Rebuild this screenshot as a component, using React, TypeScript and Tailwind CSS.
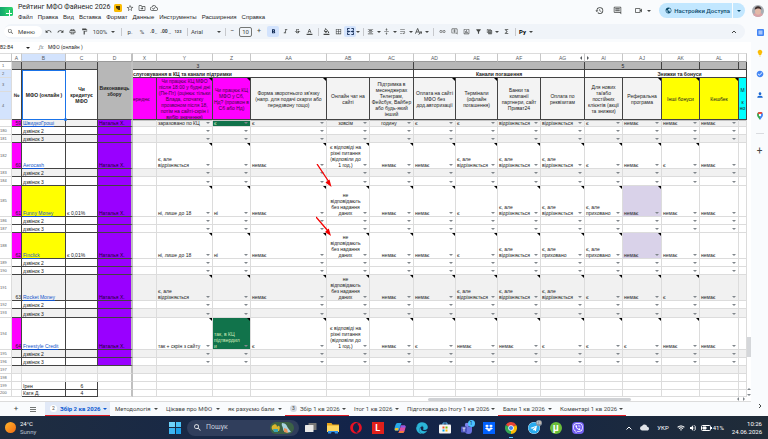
import React, { useState } from "react";
import {
  MdBorderAll,
  MdCheckCircle,
  MdCloud,
  MdFilterAlt,
  MdFormatAlignCenter,
  MdFormatBold,
  MdFormatColorFill,
  MdFormatColorText,
  MdFormatItalic,
  MdFormatPaint,
  MdFunctions,
  MdHistory,
  MdInsertChartOutlined,
  MdLightbulb,
  MdLink,
  MdOutlineAddComment,
  MdOutlineCloudDone,
  MdOutlineComment,
  MdOutlineDriveFileMove,
  MdOutlinePrint,
  MdOutlineVideocam,
  MdPerson,
  MdPublic,
  MdRedo,
  MdSearch,
  MdStarBorder,
  MdStrikethroughS,
  MdTableView,
  MdUndo,
  MdVerticalAlignCenter,
  MdVolumeUp,
  MdWifi,
  MdWrapText,
} from "react-icons/md";
import { FaDropbox, FaEdge, FaOpera, FaTelegram, FaViber } from "react-icons/fa";

const Caret = ({ className = "" }: { className?: string }) => (
  <svg viewBox="0 0 4 2" className={`h-[2px] w-1 shrink-0 ${className}`} fill="currentColor">
    <path d="M0 0h4L2 2z" />
  </svg>
);

const Sep = () => (
  <span className="flex w-[6px] shrink-0 justify-center">
    <span className="h-2 w-px bg-[#c7c9cd]" />
  </span>
);

const Tool = ({
  label,
  width = "w-3",
  active = false,
  children,
}: {
  label: string;
  width?: string;
  active?: boolean;
  children: React.ReactNode;
}) => (
  <button
    type="button"
    aria-label={label}
    className={`flex h-[11px] shrink-0 items-center justify-center rounded-[2px] ${width} ${
      active ? "bg-[#d3e3fd] text-[#041e49]" : ""
    }`}
  >
    {children}
  </button>
);

const menus = ["Файл", "Правка", "Вид", "Вставка", "Формат", "Данные", "Инструменты", "Расширения", "Справка"];

const Header = () => (
  <header className="flex h-[22px] items-start justify-between pr-1">
    <div className="flex pt-[2px]">
      <svg viewBox="0 0 14 11" className="mt-1 h-[11px] w-[14px] shrink-0">
        <defs>
          <linearGradient id="sheet" x1="0" x2="1" y1="0" y2="0">
            <stop offset="0" stopColor="#0c9d6c" />
            <stop offset="1" stopColor="#2fd66d" />
          </linearGradient>
        </defs>
        <rect x="-2" y="1" width="15" height="9" rx="1.500" fill="url(#sheet)" />
        <path d="M5 3h8v6H5z" fill="#22c96a" />
        <path d="M9.500 4v6M6 7.500h6" stroke="#fff" strokeWidth="1" />
      </svg>
      <div className="pl-1">
        <div className="flex h-[11px] items-center">
          <h1 className="font-['Roboto',sans-serif] text-[7px] leading-[11px] whitespace-nowrap text-[#1f1f1f]">
            Рейтинг МФО Файненс 2026
          </h1>
          <svg viewBox="0 0 8 8" className="ml-1 h-2 w-2">
            <rect width="8" height="8" rx="1.500" fill="#fbbc04" />
            <path d="M2 2h4v4H4.500L2 4z" fill="#4b3900" />
          </svg>
          <div className="ml-1 flex gap-1 text-[8px] text-[#444746]">
            <button type="button" aria-label="Пометить"><MdStarBorder /></button>
            <button type="button" aria-label="Переместить"><MdOutlineDriveFileMove /></button>
            <button type="button" aria-label="Сохранено"><MdOutlineCloudDone /></button>
          </div>
        </div>
        <nav className="flex gap-[5px] font-['Liberation_Sans',Arial,sans-serif] text-[6px] leading-2 text-[#1f1f1f]">
          {menus.map((m) => (
            <button type="button" key={m}>{m}</button>
          ))}
        </nav>
      </div>
    </div>
    <div className="flex items-center pt-[3px] text-[#444746]">
      <button type="button" aria-label="История" className="mr-[9px] text-[9px]"><MdHistory /></button>
      <button type="button" aria-label="Комментарии" className="mr-3 text-[9px]"><MdOutlineComment /></button>
      <button type="button" aria-label="Встреча" className="mr-2 flex items-center gap-1 text-[9px]">
        <MdOutlineVideocam />
        <Caret />
      </button>
      <div className="mr-[7px] flex h-[15px] items-center rounded-full bg-[#c2e7ff] text-[#0b4a6b]">
        <button type="button" className="flex h-full items-center gap-[2px] border-r border-[#f9fbfd] pr-[2px] pl-[6px] text-[6px] font-medium">
          <MdPublic className="text-[7px]" />
          Настройки Доступа
        </button>
        <button type="button" aria-label="Доступ" className="px-1"><Caret /></button>
      </div>
      <svg viewBox="0 0 12 12" className="h-3 w-3 rounded-full">
        <rect width="12" height="12" fill="#a9aeb4" />
        <path d="M0 12c1-4 3-4 6-4s5 0 6 4z" fill="#d9a3a8" />
        <ellipse cx="6" cy="6" rx="3" ry="3.800" fill="#e3b9a8" />
        <path d="M2.800 5C2 0 10 0 9.300 5 8.500 3 4 3 2.800 5z" fill="#3a2c2b" />
      </svg>
    </div>
  </header>
);

const Toolbar = () => (
  <div className="mt-[2px] mr-[6px] ml-1 flex h-[15px] items-center rounded-full bg-[#f0f4f9] text-[7px] text-[#444746]">
    <button type="button" className="flex h-[11px] w-[38px] shrink-0 items-center gap-1 rounded-full bg-white pl-[3px] text-[6px]">
      <MdSearch className="text-[7px]" />
      Меню
    </button>
    <Tool label="Отменить"><MdUndo /></Tool>
    <Tool label="Повторить"><MdRedo /></Tool>
    <Tool label="Печать"><MdOutlinePrint /></Tool>
    <Tool label="Формат по образцу"><MdFormatPaint /></Tool>
    <Tool label="Масштаб" width="w-[28px]">
      <span className="mr-1 text-[6px]">100%</span>
      <Caret />
    </Tool>
    <Sep />
    <Tool label="Денежный"><span className="text-[6px]">р.</span></Tool>
    <Tool label="Процент"><span className="text-[6px]">%</span></Tool>
    <Tool label="Уменьшить разрядность"><span className="text-[5px] font-bold">.0<sub>←</sub></span></Tool>
    <Tool label="Увеличить разрядность"><span className="text-[5px] font-bold">.00<sub>→</sub></span></Tool>
    <Tool label="Другие форматы"><span className="text-[4px] font-bold">123</span></Tool>
    <Sep />
    <Tool label="Шрифт" width="w-[32px]">
      <span className="mr-[14px] text-[6px]">Arial</span>
      <Caret />
    </Tool>
    <Sep />
    <Tool label="Меньше" width="w-2">−</Tool>
    <input
      aria-label="Размер шрифта"
      defaultValue="10"
      className="mx-[3px] h-[10px] w-[13px] shrink-0 rounded-[2px] border border-[#747775] text-center text-[6px]"
    />
    <Tool label="Больше" width="w-2">+</Tool>
    <span className="w-1" />
    <Tool label="Полужирный" active><MdFormatBold /></Tool>
    <Tool label="Курсив"><MdFormatItalic /></Tool>
    <Tool label="Зачеркнутый"><MdStrikethroughS /></Tool>
    <Tool label="Цвет текста"><MdFormatColorText /></Tool>
    <Sep />
    <Tool label="Заливка" width="w-[11px]"><MdFormatColorFill /></Tool>
    <Tool label="Границы"><MdBorderAll /></Tool>
    <Tool label="Объединить" active>
      <svg viewBox="0 0 8 8" className="h-[7px] w-[7px]" fill="none" stroke="currentColor">
        <path d="M3 .5H.5V3M5 .5h2.500V3M3 7.500H.5V5M5 7.500h2.500V5M0 4h3M8 4H5M2 3l1 1-1 1M6 3L5 4l1 1" />
      </svg>
    </Tool>
    <Caret />
    <Sep />
    <Tool label="Выравнивание" width="w-[16px]"><MdFormatAlignCenter className="mr-[3px]" /><Caret /></Tool>
    <Tool label="По вертикали" width="w-[16px]"><MdVerticalAlignCenter className="mr-[3px]" /><Caret /></Tool>
    <Tool label="Перенос" width="w-[16px]"><MdWrapText className="mr-[3px]" /><Caret /></Tool>
    <Tool label="Поворот" width="w-[16px]">
      <svg viewBox="0 0 8 8" className="mr-[3px] h-[7px] w-[7px]" fill="none" stroke="currentColor">
        <path d="M.5 6.500L3 .5l2.500 6M1.500 4.500h3M4 7.500l3.500-3M7.500 6.500v-2h-2" />
      </svg>
      <Caret />
    </Tool>
    <Sep />
    <Tool label="Ссылка"><MdLink /></Tool>
    <Tool label="Комментарий"><MdOutlineAddComment /></Tool>
    <Tool label="Диаграмма"><MdInsertChartOutlined /></Tool>
    <Tool label="Фильтр"><MdFilterAlt /></Tool>
    <Tool label="Таблица" width="w-[16px]"><MdTableView className="mr-[2px]" /><Caret /></Tool>
    <Tool label="Функции"><MdFunctions /></Tool>
    <Sep />
    <Tool label="Язык" width="w-[16px]"><span className="mr-[3px] text-[6px] font-bold text-black">Pу</span><Caret /></Tool>
    <button type="button" aria-label="Скрыть" className="mr-2 ml-auto">
      <svg viewBox="0 0 6 4" className="h-1 w-[6px]" fill="none" stroke="currentColor">
        <path d="M1 3l2-2 2 2" />
      </svg>
    </button>
  </div>
);

const FormulaBar = () => (
  <div className="mt-[3px] flex h-[11px] items-center bg-white text-[5px] text-[#1f1f1f]">
    <input aria-label="Диапазон" defaultValue="B2:B4" className="w-[26px] text-[5px]" />
    <Caret />
    <span className="w-[18px] pl-[9px] font-serif text-[6px] text-[#80868b] italic">fx</span>
    <span>МФО (онлайн )</span>
  </div>
);

const colWidths = [12, 10, 44, 32, 35, 24, 56, 38, 76, 43, 44, 42, 42, 43, 44, 38, 39, 38, 39];
const letters = ["", "A", "B", "C", "D", "X", "Y", "Z", "AA", "AB", "AC", "AD", "AE", "AF", "AG", "AI", "AJ", "AK", "AL", ""];

const PINK = "bg-[#ff00ff] text-[#3d0a3d] font-bold";
const GREY = "bg-[#f3f3f3]";
const YELLOW = "bg-[#ffff00]";

const criteria = [
  { text: "ереднє", tone: "bg-[#ff00ff] text-[#3d0a3d]", note: false },
  {
    text: "Чи працює КЦ МФО\nпісля 18:00 у будні дні\n(Пн-Пт) (оцінює тільки\nВлада, спочатку\nпрозвоном після 18,\nпотім на сайті-скрін і\nвибір значення)",
    tone: PINK,
    note: true,
  },
  { text: "Чи працює КЦ\nМФО у Сб,\nНд? (прозвон в\nСб або Нд)", tone: PINK, note: true },
  { text: "Форма зворотнього зв'язку\n(напр. для подачі скарги або\nпередзвону тощо)", tone: GREY, note: true },
  { text: "Онлайн чат на\nсайті", tone: GREY, note: false },
  { text: "Підтримка в\nмесенджерах\nТелеграм,\nФейсбук, Вайбер\nабо будь-який\nінший", tone: GREY, note: false },
  { text: "Оплата на сайті\nМФО без\nдод.авторизації", tone: GREY, note: true },
  { text: "Термінали\n(офлайн\nпогашення)", tone: GREY, note: true },
  { text: "Банки та\nкомпанії\nпартнери, сайт\nПриват24", tone: GREY, note: false },
  { text: "Оплата по\nреквізитам", tone: GREY, note: false },
  { text: "Для нових\nта/або\nпостійних\nклієнтів (акції\nта знижки)", tone: GREY, note: false },
  { text: "Реферальна\nпрограма", tone: GREY, note: true },
  { text: "Інші бонуси", tone: YELLOW, note: true },
  { text: "Кешбек", tone: YELLOW, note: true },
  { text: "М\n\nк\nно", tone: "bg-[#00ffff] font-bold", note: false },
];

type Row = {
  n: string;
  h: string;
  id?: string;
  name?: string;
  rate?: string;
  grey?: boolean;
  yellow?: boolean;
  plain?: boolean;
  notes?: number;
  cells?: string[];
};

const DIFF = "є, але\nвідрізняється";
const HID = "є, але\nприховано";
const ANSWER = "є відповіді на\nрізні питання\n(відповіли до\n1 год.)";
const NOANSWER = "не\nвідповідають\nбез надання\nданих";
const NO = "немає";

const rows: Row[] = [
  { n: "", h: "h-[7px]", id: "59", name: "ШвидкоГроші", grey: true, cells: ["зараховано по КЦ", "є", "є", "зовсім", "годину", "є", "є", "відрізняється", "відрізняється", "є", NO, NO, NO] },
  { n: "180", h: "h-2", name: "дзвінок 2" },
  { n: "181", h: "h-2", name: "дзвінок 3", grey: true },
  { n: "182", h: "h-[26px]", id: "60", name: "Aerocash", notes: 12, cells: [DIFF, "", NO, ANSWER, NO, NO, DIFF, DIFF, DIFF, "є", NO, "є", NO] },
  { n: "183", h: "h-2", name: "дзвінок 2", grey: true },
  { n: "184", h: "h-[9px]", name: "дзвінок 3" },
  { n: "185", h: "h-[31px]", id: "61", name: "Funny Money", rate: "є 0,01%", yellow: true, notes: 11, cells: ["ні, лише до 18", "ні", NO, NOANSWER, NO, NO, "є", DIFF, DIFF, HID, NO, NO, NO] },
  { n: "186", h: "h-2", name: "дзвінок 2" },
  { n: "187", h: "h-2", name: "дзвінок 3" },
  { n: "188", h: "h-[26px]", id: "62", name: "Finclick", rate: "є 0,01%", yellow: true, notes: 11, cells: ["ні, лише до 18", "ні", NO, NOANSWER, NO, NO, "є", DIFF, HID, HID, NO, NO, NO] },
  { n: "189", h: "h-2", name: "дзвінок 2" },
  { n: "190", h: "h-2", name: "дзвінок 3" },
  { n: "191", h: "h-[26px]", id: "63", name: "Rocket Money", grey: true, notes: 12, cells: [DIFF, "", NO, NOANSWER, NO, NO, DIFF, DIFF, DIFF, "є", NO, "є", NO] },
  { n: "192", h: "h-2", name: "дзвінок 2" },
  { n: "193", h: "h-[9px]", name: "дзвінок 3", grey: true },
  { n: "194", h: "h-[32px]", id: "64", name: "Freestyle Credit", notes: 12, cells: ["так + скрін з сайту", "так, в КЦ\nпідтвердил\nи", "є", ANSWER, NO, "є", NO, NO, "є", "є", "є", NO, NO] },
  { n: "195", h: "h-2", name: "дзвінок 2", grey: true },
  { n: "196", h: "h-2", name: "дзвінок 3" },
  { n: "197", h: "h-2", plain: true, grey: true },
  { n: "198", h: "h-2", plain: true },
  { n: "199", h: "h-2", plain: true, name: "Ірен", rate: "6" },
  { n: "200", h: "h-[7px]", plain: true, name: "Катя Д.", rate: "4" },
];

const DARK = "border-r border-b border-[#434343]";
const LIGHT = "border-r border-b border-[#dcdcdc]";

const Note = () => (
  <svg viewBox="0 0 3 3" className="absolute top-0 right-0 h-[3px] w-[3px]">
    <path d="M0 0h3v3z" />
  </svg>
);

const RowNumber = ({ n, active = false }: { n: string; active?: boolean }) => (
  <th className={`${LIGHT} text-left align-middle font-normal text-[#575b5f] ${active ? "bg-[#d3e3fd]" : "bg-white"}`}>
    <span className="block w-[6px] text-center text-[4px]">{n}</span>
  </th>
);

const DataRow = ({ row, first }: { row: Row; first: boolean }) => {
  const base = row.grey ? "bg-[#f1f1f1]" : "bg-white";
  const frozen = first ? "shadow-[inset_0_1px_#c4c4c4]" : "";
  const named = row.plain && row.name;
  const pink = row.id && row.id !== "63";

  return (
    <tr className={`${row.h} ${base} align-bottom`}>
      <RowNumber n={row.n} />
      <td className={`${row.plain ? LIGHT : DARK} ${pink ? "bg-[#ff00ff]" : ""} text-right`}>{row.id}</td>
      <td className={`${row.plain && !named ? LIGHT : DARK} ${row.yellow ? YELLOW : ""} pl-px`}>
        {row.id ? (
          <a href="#site" className="text-[#1155cc] underline">{row.name}</a>
        ) : (
          row.name
        )}
      </td>
      <td className={`${row.plain && !named ? LIGHT : DARK} ${named ? "text-center" : ""} pl-px`}>{row.rate}</td>
      <td
        className={`border-r-2 border-b border-r-[#c0c0c0] pl-px ${
          row.plain ? "border-b-[#dcdcdc]" : "border-b-[#434343] bg-[#9900ff] text-[#1c0030]"
        }`}
      >
        {row.id ? "Наталья Х." : ""}
      </td>
      <td className={`${LIGHT} ${frozen}`}></td>
      {Array.from({ length: 13 }, (_, i) => {
        const text = row.cells?.[i] ?? "";
        const green = i === 1 && (row.n === "" || row.n === "194");
        const lilac = i === 10 && row.yellow;
        const centered = i === 3 || i === 4;
        return (
          <td
            key={i}
            className={`relative ${LIGHT} ${frozen} ${green ? "bg-[#11734b] text-[#d4edbc]" : ""} ${
              lilac ? "bg-[#d9d2e9]" : ""
            }`}
          >
            {!row.plain && (
              <div className="flex items-end justify-between pr-[2px] pl-px">
                <span className={`min-w-0 flex-1 whitespace-pre ${centered ? "text-center" : ""}`}>{text}</span>
                <button type="button" aria-label="Вибрати" className="flex h-[6px] shrink-0 items-center text-[#80868b]">
                  <Caret />
                </button>
              </div>
            )}
            {i < (row.notes ?? 0) && <Note />}
          </td>
        );
      })}
      <td className={`${LIGHT} ${frozen}`}></td>
    </tr>
  );
};

const Sheet = () => (
  <div className="relative min-w-0 flex-1 overflow-hidden bg-white">
    <table className="w-full table-fixed border-separate border-spacing-0 font-['Liberation_Sans',Arial,sans-serif] text-[5px] leading-[6px] text-[#222]">
      <colgroup>
        {colWidths.map((w, i) => (
          <col key={i} style={{ width: w }} />
        ))}
        <col />
      </colgroup>
      <thead>
        <tr className="h-[9px]">
          {letters.map((l, i) => (
            <th
              key={i}
              className={`relative border-b border-b-[#9a9a9a] font-normal text-[#575b5f] ${
                i === 4 ? "border-r-2 border-r-[#c0c0c0]" : "border-r border-r-[#c7c7c7]"
              } border-t border-t-[#dcdcdc] ${l === "B" ? "bg-[#d3e3fd]" : "bg-white"}`}
            >
              {l}
              {l === "AG" && <Caret className="absolute top-[3px] right-px rotate-90" />}
              {l === "AI" && <Caret className="absolute top-[3px] left-px -rotate-90" />}
            </th>
          ))}
        </tr>
        <tr className="h-2 bg-[#b7b7b7]">
          <RowNumber n="1" />
          <td className={DARK}></td>
          <td className={DARK}></td>
          <td className={DARK}></td>
          <th rowSpan={4} className="border-r-2 border-b border-r-[#c0c0c0] border-b-[#434343] whitespace-pre">
            {"Виконавець\nзбору"}
          </th>
          <th colSpan={6} className={`${DARK} pr-[150px] font-normal`}>3</th>
          <td colSpan={4} className={DARK}></td>
          <th colSpan={2} className={`${DARK} font-normal`}>5</th>
          <td className={DARK}></td>
          <td className={DARK}></td>
          <td className={DARK}></td>
        </tr>
        <tr className="h-2">
          <RowNumber n="2" active />
          <th rowSpan={3} className={DARK}>№</th>
          <th rowSpan={3} className="relative border border-[#1a73e8]">
            МФО (онлайн )
            <span className="absolute -right-[2px] -bottom-[2px] size-[3px] rounded-full bg-[#1a73e8]" />
          </th>
          <th rowSpan={3} className={`${DARK} whitespace-pre`}>{"Чи\nкредитує\nМФО"}</th>
          <th colSpan={6} className={`${DARK} text-left whitespace-nowrap`}>слуговування в КЦ та канали підтримки</th>
          <th colSpan={4} className={DARK}>Канали погашення</th>
          <th colSpan={5} className={`${DARK} pl-[28px]`}>Знижки та бонуси</th>
        </tr>
        <tr className="h-[14px]">
          <RowNumber n="3" active />
          {criteria.map((c, i) => (
            <th key={c.text} rowSpan={2} className={`relative font-normal ${DARK} ${c.tone}`}>
              <div
                className={`flex h-[41px] items-center overflow-hidden whitespace-pre ${
                  i === 0 ? "justify-start" : "justify-center"
                }`}
              >
                {c.text}
              </div>
              {c.note && <Note />}
            </th>
          ))}
        </tr>
        <tr className="h-[28px]">
          <RowNumber n="4" active />
        </tr>
      </thead>
      <tbody>
        {rows.map((row, i) => (
          <DataRow key={i} row={row} first={i === 0} />
        ))}
      </tbody>
    </table>
    <svg viewBox="0 0 16 74" className="absolute top-[111px] left-[316px] h-[74px] w-4" fill="none" stroke="#f40000">
      <path d="M1 0l12 18M0 53l12 14" strokeWidth="1.300" />
      <path d="M15.500 23l-6-4.500 4-3zM15 72l-6-4 3.800-3.500z" fill="#f40000" stroke="none" />
    </svg>
  </div>
);

const tabs = [
  { label: "Збір 2 кв 2026", width: "w-[65px]", badge: "2", red: true },
  { label: "Методологія", width: "w-[51px]" },
  { label: "Цікаве про МФО", width: "w-[62px]" },
  { label: "як рахуємо бали", width: "w-[62px]" },
  { label: "Збір 1 кв 2026", width: "w-[64px]", badge: "3", red: true },
  { label: "Ітог 1 кв 2026", width: "w-[53px]" },
  { label: "Підготовка до Ітогу 1 кв 2026", width: "w-[96px]" },
  { label: "Бали 1 кв 2026", width: "w-[57px]", red: true },
  { label: "Коментарі 1 кв 2026", width: "w-[71px]", red: true },
];

const SheetTabs = () => {
  const [current, setCurrent] = useState(0);

  return (
    <div className="flex h-[14px] items-center text-[6px] text-[#444746]">
      <button type="button" aria-label="Додати аркуш" className="w-[20px] pl-[12px] text-[8px] leading-[8px]">+</button>
      <button type="button" aria-label="Усі аркуші" className="flex w-[25px] flex-col items-center gap-px">
        <span className="h-px w-[6px] bg-[#747775]" />
        <span className="h-px w-[6px] bg-[#747775]" />
        <span className="h-px w-[6px] bg-[#747775]" />
      </button>
      {tabs.map((t, i) => (
        <button
          type="button"
          key={t.label}
          onClick={() => setCurrent(i)}
          className={`flex h-full shrink-0 items-center border-b pr-[3px] pl-[5px] whitespace-nowrap ${t.width} ${
            t.red ? "border-[#e01b24]" : "border-transparent"
          } ${i === current ? "bg-[#e1e9f7] font-bold text-[#0b57d0]" : ""}`}
        >
          {t.badge && (
            <span
              className={`mr-[3px] flex size-[7px] items-center justify-center rounded-full text-[5px] font-normal text-[#444746] ${
                i === current ? "bg-white" : "bg-[#d5dae3]"
              }`}
            >
              {t.badge}
            </span>
          )}
          {t.label}
          <Caret className="ml-auto" />
        </button>
      ))}
    </div>
  );
};

const SidePanel = () => (
  <aside className="flex w-[17px] shrink-0 flex-col items-center pt-[6px]">
    <div className="flex flex-col items-center gap-[13px]">
      <svg viewBox="0 0 8 8" className="size-2">
        <rect x="1" y="1" width="7" height="7" rx="1" fill="#4285f4" />
        <rect x="2.500" y="2.500" width="4" height="4" fill="#a8c7fa" />
      </svg>
      <MdLightbulb className="size-2 text-[#fbbc04]" />
      <MdCheckCircle className="size-2 text-[#4285f4]" />
      <MdPerson className="size-2 text-[#1967d2]" />
      <svg viewBox="0 0 8 8" className="size-2">
        <path d="M4 8C3 6 1 5 1 3a3 3 0 0 1 3-3v8z" fill="#34a853" />
        <path d="M4 8c1-2 3-3 3-5a3 3 0 0 0-3-3v8z" fill="#4285f4" />
        <path d="M1.500 1.500A3 3 0 0 1 6.500 1L4 3z" fill="#ea4335" />
        <circle cx="4" cy="3" r="1.200" fill="#fff" />
      </svg>
    </div>
    <span className="mt-[13px] h-px w-2 bg-[#dadce0]" />
    <button type="button" aria-label="Дополнения" className="mt-3 text-[10px] leading-[10px] text-[#444746]">+</button>
    <button type="button" aria-label="Скрыть панель" className="mt-auto mb-[7px]">
      <svg viewBox="0 0 4 6" className="h-[6px] w-1" fill="none" stroke="#444746">
        <path d="M1 1l2 2-2 2" />
      </svg>
    </button>
  </aside>
);

const apps = [
  {
    name: "Task view",
    icon: (
      <svg viewBox="0 0 12 12" className="size-3">
        <rect x="3.500" y="1" width="8" height="7" rx=".5" fill="#777" />
        <rect x="0" y="3" width="8.500" height="7" rx=".5" fill="#e8e8e8" />
      </svg>
    ),
  },
  {
    name: "Explorer",
    icon: (
      <svg viewBox="0 0 12 12" className="size-3">
        <path d="M0 1h4.500l1 1.500H12V6H0z" fill="#e8a317" />
        <path d="M0 3.500h12V10H0z" fill="#ffd75e" />
        <path d="M1 9h10v2.500H8L7.500 10h-3L4 11.500H1z" fill="#2f8fe8" />
      </svg>
    ),
  },
  { name: "Opera", icon: <FaOpera className="size-3 text-[#e81224]" /> },
  {
    name: "Lightshot",
    icon: <span className="flex size-3 items-center justify-center bg-[#e0201b] text-[9px] leading-3 font-bold text-white">L</span>,
  },
  {
    name: "Copilot",
    icon: (
      <svg viewBox="0 0 12 12" className="size-3">
        <path d="M3.500 1h4L5 8.500H1.500C0 8.500.5 6 1 4.500S2 1 3.500 1z" fill="#2aa8e8" />
        <path d="M1.500 6h3l-.5 2.500H1.500C.5 8.500.5 7 1.500 6z" fill="#f2c230" />
        <path d="M8.500 11h-4L7 3.500h3.500c1.500 0 1 2.500.5 4S10 11 8.500 11z" fill="#d94fa5" />
        <path d="M7 3.500h3.500c1 0 1.200 1 1 2H6.300z" fill="#8a5be8" />
        <path d="M4.500 11h4c1 0 1.500-1 2-2H5.200z" fill="#f27a3d" />
      </svg>
    ),
  },
  { name: "Edge", icon: <FaEdge className="size-3 text-[#2bb5d8]" /> },
  {
    name: "Store",
    icon: (
      <svg viewBox="0 0 12 12" className="size-3">
        <path d="M4 3V1h4v2" fill="none" stroke="#5ab8f0" />
        <rect y="2.500" width="12" height="9" rx="1" fill="#f5f5f5" />
        <path d="M3.500 4.500h2v2h-2z" fill="#f25022" />
        <path d="M6.500 4.500h2v2h-2z" fill="#7fba00" />
        <path d="M3.500 7.500h2v2h-2z" fill="#00a4ef" />
        <path d="M6.500 7.500h2v2h-2z" fill="#ffb900" />
      </svg>
    ),
  },
  {
    name: "Teams",
    icon: (
      <span className="relative block size-3">
        <svg viewBox="0 0 12 12" className="size-3">
          <circle cx="6" cy="3" r="2.200" fill="#7b83eb" />
          <path d="M3 5h8v3.500a3.500 3.500 0 0 1-7 0z" fill="#6a72e0" />
          <rect y="4.500" width="6" height="6" rx=".8" fill="#4b53bc" />
          <path d="M1.500 6h3M3 6v3.500" stroke="#fff" strokeWidth=".8" />
        </svg>
        <span className="absolute -top-[2px] -right-[2px] flex size-[7px] items-center justify-center rounded-full bg-[#4cc2ff] text-[5px] leading-[5px] text-[#0b2a4a]">1</span>
      </span>
    ),
  },
  {
    name: "Dropbox",
    icon: (
      <span className="flex size-3 items-center justify-center bg-[#0061fe] text-white"><FaDropbox className="size-2" /></span>
    ),
  },
  {
    name: "Chrome",
    icon: (
      <span className="relative block size-3">
        <svg viewBox="0 0 12 12" className="size-3">
          <path d="M6 6L.8 3a6 6 0 0 1 10.400 0z" fill="#ea4335" />
          <path d="M6 6L.8 3A6 6 0 0 0 6 12z" fill="#34a853" />
          <path d="M6 6l5.200-3A6 6 0 0 1 6 12z" fill="#fbbc04" />
          <circle cx="6" cy="6" r="2.800" fill="#fff" />
          <circle cx="6" cy="6" r="2.100" fill="#4285f4" />
        </svg>
        <span className="absolute -bottom-1 left-1 h-px w-1 bg-[#4cc2ff]" />
      </span>
    ),
  },
  {
    name: "Telegram",
    icon: (
      <span className="relative block size-3">
        <FaTelegram className="size-3 rounded-full bg-white text-[#2aabee]" />
        <span className="absolute -top-[2px] -right-[2px] flex size-[6px] items-center justify-center rounded-full bg-[#8a949e] text-[4px] leading-[4px] text-white">13</span>
      </span>
    ),
  },
  {
    name: "uTorrent",
    icon: <span className="flex size-3 items-center justify-center rounded-full bg-[#6bbf3b] text-[10px] leading-3 font-bold text-white">µ</span>,
  },
  {
    name: "Viber",
    icon: (
      <span className="flex size-3 items-center justify-center rounded-[4px] bg-[#7360f2] text-white">
        <FaViber className="size-[10px]" />
      </span>
    ),
  },
];

const Taskbar = () => (
  <footer className="flex h-[23px] items-center bg-linear-to-r from-[#1f2d40] via-[#12234a] to-[#202c38] text-[6px] text-white">
    <div className="flex w-[165px] items-center gap-1 pl-[5px]">
      <span className="size-[11px] rounded-full bg-linear-to-br from-[#ffb52b] to-[#f26a12]" />
      <div className="leading-2">
        <p>24°C</p>
        <p className="text-[#b9c2ce]">Sunny</p>
      </div>
    </div>
    <button type="button" aria-label="Пуск" className="ml-1 grid size-3 grid-cols-2 gap-px">
      <span className="h-full bg-[#6fd3fb]" />
      <span className="h-full bg-[#4cc2f7]" />
      <span className="h-full bg-[#3db5f2]" />
      <span className="h-full bg-[#1c9fe8]" />
    </button>
    <label className="ml-[6px] flex h-4 w-[112px] shrink-0 items-center rounded-full bg-[#303e5c] pl-[6px]">
      <MdSearch className="mr-1 text-[9px]" />
      <input aria-label="Пошук" placeholder="Пошук" className="w-[60px] text-[7px] placeholder:text-[#c9d0dc]" />
      <svg viewBox="0 0 26 14" className="mr-1 ml-auto h-[14px] w-[26px] shrink-0">
        <rect x="1" y="1" width="24" height="12" rx="6" fill="#3c6246" />
        <path d="M3 5c3-3 5-2 5 1 2-3 4 0 2 4H5C3 9 2 7 3 5z" fill="#d9b62c" />
        <path d="M4 8h5v3H5z" fill="#3aa6b0" />
        <path d="M13 2c4 0 5 3 6 5l3 4c-4 1-8 0-8-3s-2-3-1-6z" fill="#a9d4e0" />
        <path d="M15 7l3 1 1 4-4-1z" fill="#e8935b" />
      </svg>
    </label>
    <div className="ml-[6px] flex w-[279px] shrink-0 justify-between">
      {apps.map((a) => (
        <button type="button" key={a.name} aria-label={a.name}>{a.icon}</button>
      ))}
    </div>
    <div className="ml-auto flex items-center pr-[6px]">
      <svg viewBox="0 0 6 4" className="mr-2 h-1 w-[6px]" fill="none" stroke="#fff">
        <path d="M.5 3.500L3 1l2.500 2.500" />
      </svg>
      <MdCloud className="mr-2 text-[9px] text-[#dfe3e8]" />
      <span className="mr-2">УКР</span>
      <MdWifi className="mr-1 text-[8px]" />
      <MdVolumeUp className="mr-1 text-[8px]" />
      <svg viewBox="0 0 11 6" className="mr-px h-[6px] w-[11px]" fill="none" stroke="#fff">
        <rect x=".5" y=".5" width="9" height="5" rx="1" />
        <path d="M2 2h3v2H2zM10.500 2v2" fill="#fff" />
      </svg>
      <span className="mr-2">41%</span>
      <div className="text-right leading-2">
        <p>10:26</p>
        <p>24.06.2026</p>
      </div>
    </div>
  </footer>
);

const App = () => (
  <main className="flex min-h-screen flex-col overflow-hidden bg-[#f9fbfd] font-['Roboto',sans-serif]">
    <Header />
    <div className="flex flex-1">
      <div className="min-w-0 flex-1">
        <Toolbar />
        <FormulaBar />
        <div className="flex">
          <Sheet />
          <div className="flex w-1 flex-col items-center bg-white pb-px">
            <span className="mt-[284px] h-5 w-1 bg-[#d5d7da]" />
            <span className="mt-auto flex flex-col gap-1 text-[#80868b]">
              <Caret className="rotate-180" />
              <Caret />
            </span>
          </div>
        </div>
        <div className="flex h-[5px] items-center border-b border-[#dcdcdc] bg-white">
          <span className="ml-[57%] h-[3px] w-[27%] rounded-full bg-[#d0d2d5]" />
          <span className="ml-auto flex gap-[2px] pr-[5px] text-[#80868b]">
            <Caret className="rotate-90" />
            <Caret className="-rotate-90" />
          </span>
        </div>
        <SheetTabs />
      </div>
      <SidePanel />
    </div>
    <Taskbar />
  </main>
);

export default App;
